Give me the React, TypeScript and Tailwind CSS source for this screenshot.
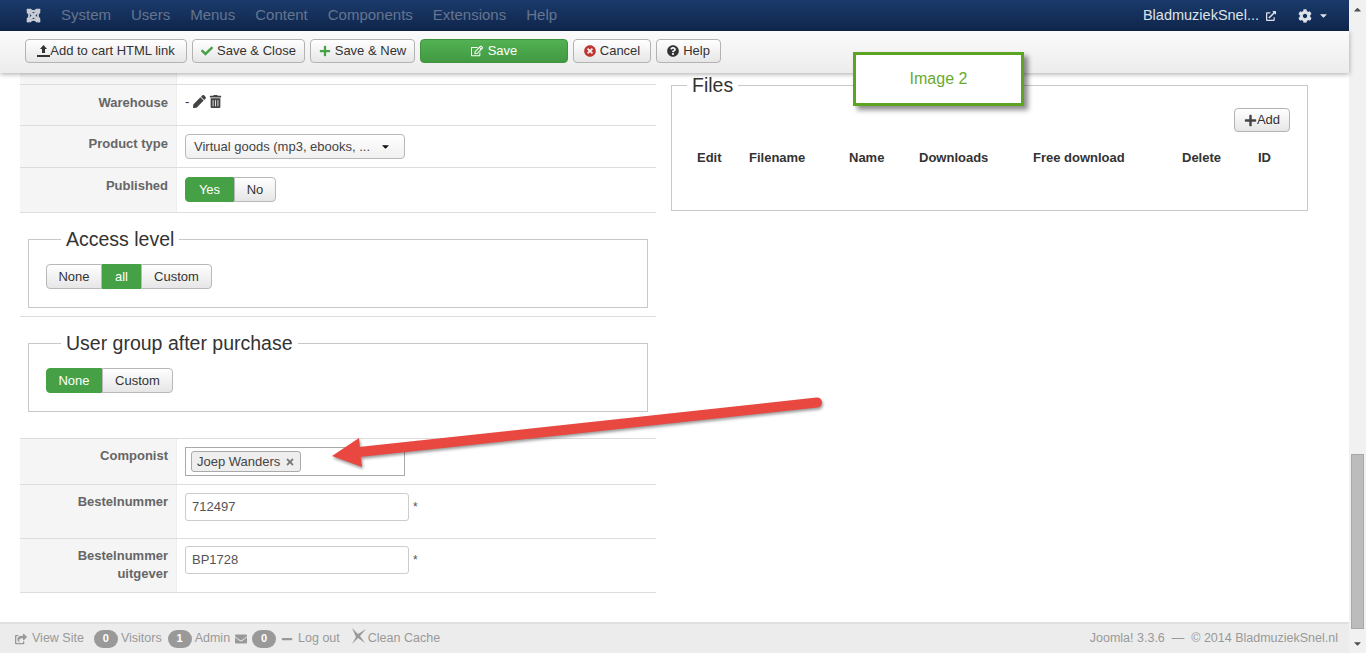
import React from "react";
import {
  FaCheck, FaPlus, FaRegEdit, FaTimesCircle, FaQuestionCircle, FaPen, FaTrashAlt,
  FaCog, FaExternalLinkAlt, FaCaretDown, FaShareSquare, FaEnvelope, FaMinus, FaTimes, FaCaretUp,
} from "react-icons/fa";

function Btn({ className = "", children }: { className?: string; children: React.ReactNode }) {
  return (
    <div className={"flex items-center justify-center h-[24px] rounded-[4px] border border-[#b3b3b3] bg-gradient-to-b from-[#ffffff] to-[#e6e6e6] text-[13px] text-[#333333] " + className}>
      {children}
    </div>
  );
}

function Seg({ on, w, first, last, children }: { on?: boolean; w: string; first?: boolean; last?: boolean; children: React.ReactNode }) {
  return (
    <div
      className={
        "flex items-center justify-center h-[25px] text-[13px] border " +
        w + " " +
        (first ? "rounded-l-[4px] " : "") +
        (last ? "rounded-r-[4px] " : "") +
        (on
          ? "bg-[#46a046] border-[#46a046] text-white"
          : "bg-gradient-to-b from-[#ffffff] to-[#e6e6e6] border-[#b8b8b8] text-[#333333]")
      }
    >
      {children}
    </div>
  );
}

function Row({ label, h, top = "pt-[9px]", children }: { label: React.ReactNode; h: string; top?: string; children: React.ReactNode }) {
  return (
    <div className={"flex border-b border-[#dddddd] " + h}>
      <div className={"w-[157px] shrink-0 bg-[#f5f5f5] border-r border-[#eeeeee] pr-[8px] text-right font-bold text-[13px] leading-[18px] text-[#666666] " + top}>
        {label}
      </div>
      <div className="flex-1 pl-[8px] min-w-0">{children}</div>
    </div>
  );
}

function Fieldset({ title, className, children }: { title: string; className: string; children: React.ReactNode }) {
  return (
    <fieldset className={"border border-[#c8c8c8] " + className}>
      <legend className="ml-[15px] px-[5px] text-[19.5px] leading-[22px] text-[#333333]">{title}</legend>
      {children}
    </fieldset>
  );
}

function Badge({ children }: { children: React.ReactNode }) {
  return (
    <span className="flex items-center justify-center w-[24px] h-[18px] rounded-full bg-[#999999] text-white font-bold text-[11px]">
      {children}
    </span>
  );
}

function JoomlaLogo() {
  return (
    <svg width="17" height="17" viewBox="0 0 17 17" fill="none" stroke="#c9ced6" strokeWidth="3" strokeLinecap="round">
      <path d="M3 3 L14 14 M14 3 L3 14" />
      <path d="M5 2.5 Q8.5 6 12 2.5 M5 14.5 Q8.5 11 12 14.5 M2.5 5 Q6 8.5 2.5 12 M14.5 5 Q11 8.5 14.5 12" strokeWidth="1.8" />
    </svg>
  );
}

function UploadIcon() {
  return (
    <svg width="13" height="12" viewBox="0 0 13 12" fill="#333333">
      <path d="M6.5 0 L10 4 H8 V8 H5 V4 H3 Z" />
      <path d="M0 10 H13 V12 H0 Z" />
    </svg>
  );
}

function BroomIcon() {
  return (
    <svg width="16" height="17" viewBox="0 0 16 17" fill="#999999">
      <path d="M1 0 L7 6 L15 1 L9 8 L14 15 L7 10 L1 16 L5 9 Z" />
    </svg>
  );
}

export default function App() {
  const menu = ["System", "Users", "Menus", "Content", "Components", "Extensions", "Help"];
  return (
    <div className="relative flex w-[1366px] h-[653px] overflow-hidden bg-white font-['Liberation_Sans',Arial,sans-serif]">
      <div className="flex flex-col w-[1349px] h-full">
        <div className="flex items-center h-[31px] shrink-0 bg-gradient-to-b from-[#1a3a6b] to-[#10264c] pl-[25px] pr-[20px] text-[15px]">
          <JoomlaLogo />
          <div className="flex gap-[20px] ml-[19px] text-[#65758f]">
            {menu.map((m) => (
              <span key={m}>{m}</span>
            ))}
          </div>
          <span className="ml-auto text-[#dfe3e9] text-[14.5px]">BladmuziekSnel...</span>
          <FaExternalLinkAlt className="ml-[7px] text-[#dfe3e9] text-[10px]" />
          <FaCog className="ml-[22px] text-[#dfe3e9] text-[14px]" />
          <FaCaretDown className="ml-[6px] text-[#dfe3e9] text-[11px]" />
        </div>

        <div className="relative z-10 flex items-center gap-[5px] h-[42px] shrink-0 pl-[25px] pb-[2px] bg-gradient-to-b from-[#fbfbfb] to-[#ececec] shadow-[0_1px_5px_rgba(0,0,0,0.35)]">
          <Btn className="w-[162px]">
            <UploadIcon />
            <span>Add to cart HTML link</span>
          </Btn>
          <Btn className="w-[113px] gap-[4px]">
            <FaCheck className="text-[#46a046] text-[12px]" />
            <span>Save &amp; Close</span>
          </Btn>
          <Btn className="w-[105px] gap-[4px]">
            <FaPlus className="text-[#46a046] text-[12px]" />
            <span>Save &amp; New</span>
          </Btn>
          <div className="flex items-center justify-center gap-[5px] w-[148px] h-[24px] rounded-[4px] bg-gradient-to-b from-[#52b152] to-[#429a42] border border-[#3e943e] text-white text-[13px]">
            <FaRegEdit className="text-[12px]" />
            <span>Save</span>
          </div>
          <Btn className="w-[78px] gap-[4px]">
            <FaTimesCircle className="text-[#bd362f] text-[12px]" />
            <span>Cancel</span>
          </Btn>
          <Btn className="w-[65px] gap-[4px]">
            <FaQuestionCircle className="text-[#333333] text-[12px]" />
            <span>Help</span>
          </Btn>
        </div>

        <div className="flex flex-1 min-h-0">
          <div className="w-[636px] ml-[20px] shrink-0">
            <div className="flex h-[12px] border-b border-[#dddddd]">
              <div className="w-[157px] bg-[#f5f5f5] border-r border-[#eeeeee]" />
            </div>
            <Row label="Warehouse" h="h-[41px]" top="pt-[9px]">
              <div className="flex items-center gap-[3px] pt-[7px] text-[13px] text-[#333333]">
                <span className="mr-[1px]">-</span>
                <FaPen className="text-[#444444] text-[13px]" />
                <FaTrashAlt className="text-[#444444] text-[13px]" />
              </div>
            </Row>
            <Row label="Product type" h="h-[42px]" top="pt-[9px]">
              <div className="flex items-center w-[220px] h-[25px] mt-[8px] pl-[8px] rounded-[4px] border border-[#b8b8b8] bg-gradient-to-b from-[#ffffff] to-[#f0f0f0] text-[13px] text-[#444444]">
                <span>Virtual goods (mp3, ebooks, ...</span>
                <FaCaretDown className="ml-[10px] text-[#111111] text-[11px]" />
              </div>
            </Row>
            <Row label="Published" h="h-[45px]" top="pt-[9px]">
              <div className="flex mt-[9px]">
                <Seg on first w="w-[49px]">Yes</Seg>
                <Seg last w="w-[42px]">No</Seg>
              </div>
            </Row>

            <div className="px-[8px] pt-[15px] pb-[8px] border-b border-[#dddddd]">
              <Fieldset title="Access level" className="h-[80px] pl-[17px] pt-[14px]">
                <div className="flex">
                  <Seg first w="w-[56px]">None</Seg>
                  <Seg on w="w-[39px]">all</Seg>
                  <Seg last w="w-[71px]">Custom</Seg>
                </div>
              </Fieldset>
            </div>
            <div className="px-[8px] pt-[15px] pb-[26px]">
              <Fieldset title="User group after purchase" className="h-[80px] pl-[17px] pt-[14px]">
                <div className="flex">
                  <Seg on first w="w-[56px]">None</Seg>
                  <Seg last w="w-[71px]">Custom</Seg>
                </div>
              </Fieldset>
            </div>

            <div className="border-t border-[#dddddd]">
              <Row label="Componist" h="h-[46px]" top="pt-[8px]">
                <div className="flex items-center w-[220px] h-[29px] mt-[8px] pl-[5px] border border-[#aaaaaa]">
                  <div className="flex items-center gap-[5px] w-[110px] h-[21px] pl-[5px] rounded-[3px] border border-[#aaaaaa] bg-[#eeeeee] text-[13px] text-[#444444]">
                    <span>Joep Wanders</span>
                    <FaTimes className="text-[#777777] text-[10px]" />
                  </div>
                </div>
              </Row>
              <Row label="Bestelnummer" h="h-[54px]" top="pt-[8px]">
                <div className="flex items-center mt-[8px]">
                  <div className="flex items-center w-[224px] h-[28px] pl-[6px] rounded-[3px] border border-[#cccccc] text-[13px] text-[#555555]">712497</div>
                  <span className="ml-[4px] text-[12px] text-[#555555]">*</span>
                </div>
              </Row>
              <Row label={<>Bestelnummer<br />uitgever</>} h="h-[54px]" top="pt-[8px]">
                <div className="flex items-center mt-[7px]">
                  <div className="flex items-center w-[224px] h-[28px] pl-[6px] rounded-[3px] border border-[#cccccc] text-[13px] text-[#555555]">BP1728</div>
                  <span className="ml-[4px] text-[12px] text-[#555555]">*</span>
                </div>
              </Row>
            </div>
          </div>

          <div className="w-[637px] ml-[15px] shrink-0 pt-[1px]">
            <Fieldset title="Files" className="h-[137px] relative">
              <div className="flex justify-end pr-[17px] pt-[12px]">
                <Btn className="w-[56px] text-[13px]">
                  <FaPlus className="text-[#444444] text-[13px]" />
                  <span>Add</span>
                </Btn>
              </div>
              <table className="ml-[25px] mt-[16px] table-fixed text-left text-[13px] font-bold text-[#333333]">
                <tbody>
                  <tr>
                    <td className="w-[52px]">Edit</td>
                    <td className="w-[100px]">Filename</td>
                    <td className="w-[70px]">Name</td>
                    <td className="w-[114px]">Downloads</td>
                    <td className="w-[149px]">Free download</td>
                    <td className="w-[76px]">Delete</td>
                    <td className="w-[40px]">ID</td>
                  </tr>
                </tbody>
              </table>
            </Fieldset>
          </div>
        </div>

        <div className="flex items-center h-[31px] shrink-0 border-t-2 border-[#e0e0e0] bg-[#ececec] pl-[15px] pr-[11px] text-[12.5px] text-[#999999]">
          <FaShareSquare className="text-[12px]" />
          <span className="ml-[5px]">View Site</span>
          <span className="ml-[10px]"><Badge>0</Badge></span>
          <span className="ml-[3px]">Visitors</span>
          <span className="ml-[6px]"><Badge>1</Badge></span>
          <span className="ml-[3px]">Admin</span>
          <FaEnvelope className="ml-[5px] text-[12px]" />
          <span className="ml-[5px]"><Badge>0</Badge></span>
          <FaMinus className="ml-[5px] text-[12px]" />
          <span className="ml-[5px]">Log out</span>
          <span className="ml-[11px] -mt-[4px]"><BroomIcon /></span>
          <span className="ml-[1px]">Clean Cache</span>
          <span className="ml-auto">Joomla! 3.3.6 &nbsp;— &nbsp;© 2014 BladmuziekSnel.nl</span>
        </div>
      </div>

      <div className="flex flex-col items-center w-[17px] h-full bg-[#f1f1f1] text-[#505050]">
        <FaCaretUp className="mt-[4px] text-[11px]" />
        <div className="mt-auto w-[13px] h-[175px] bg-[#bcbcbc] border border-[#a8a8a8]" />
        <FaCaretDown className="mt-[9px] mb-[4px] text-[11px]" />
      </div>

      <div className="absolute left-[853px] top-[52px] flex items-center justify-center w-[171px] h-[54px] bg-white border-[3px] border-[#5da423] shadow-[4px_4px_5px_rgba(0,0,0,0.45)] text-[16px] text-[#6aab2e] z-20">
        Image 2
      </div>

      <svg className="absolute left-0 top-0 z-20 pointer-events-none" width="1366" height="653" style={{ filter: "drop-shadow(1px 2px 1.5px rgba(0,0,0,0.4))" }}>
        <line x1="817" y1="402.5" x2="350" y2="453" stroke="#e8483f" strokeWidth="10" strokeLinecap="round" />
        <polygon points="332,456 359,438 362,467" fill="#e8483f" />
      </svg>
    </div>
  );
}
